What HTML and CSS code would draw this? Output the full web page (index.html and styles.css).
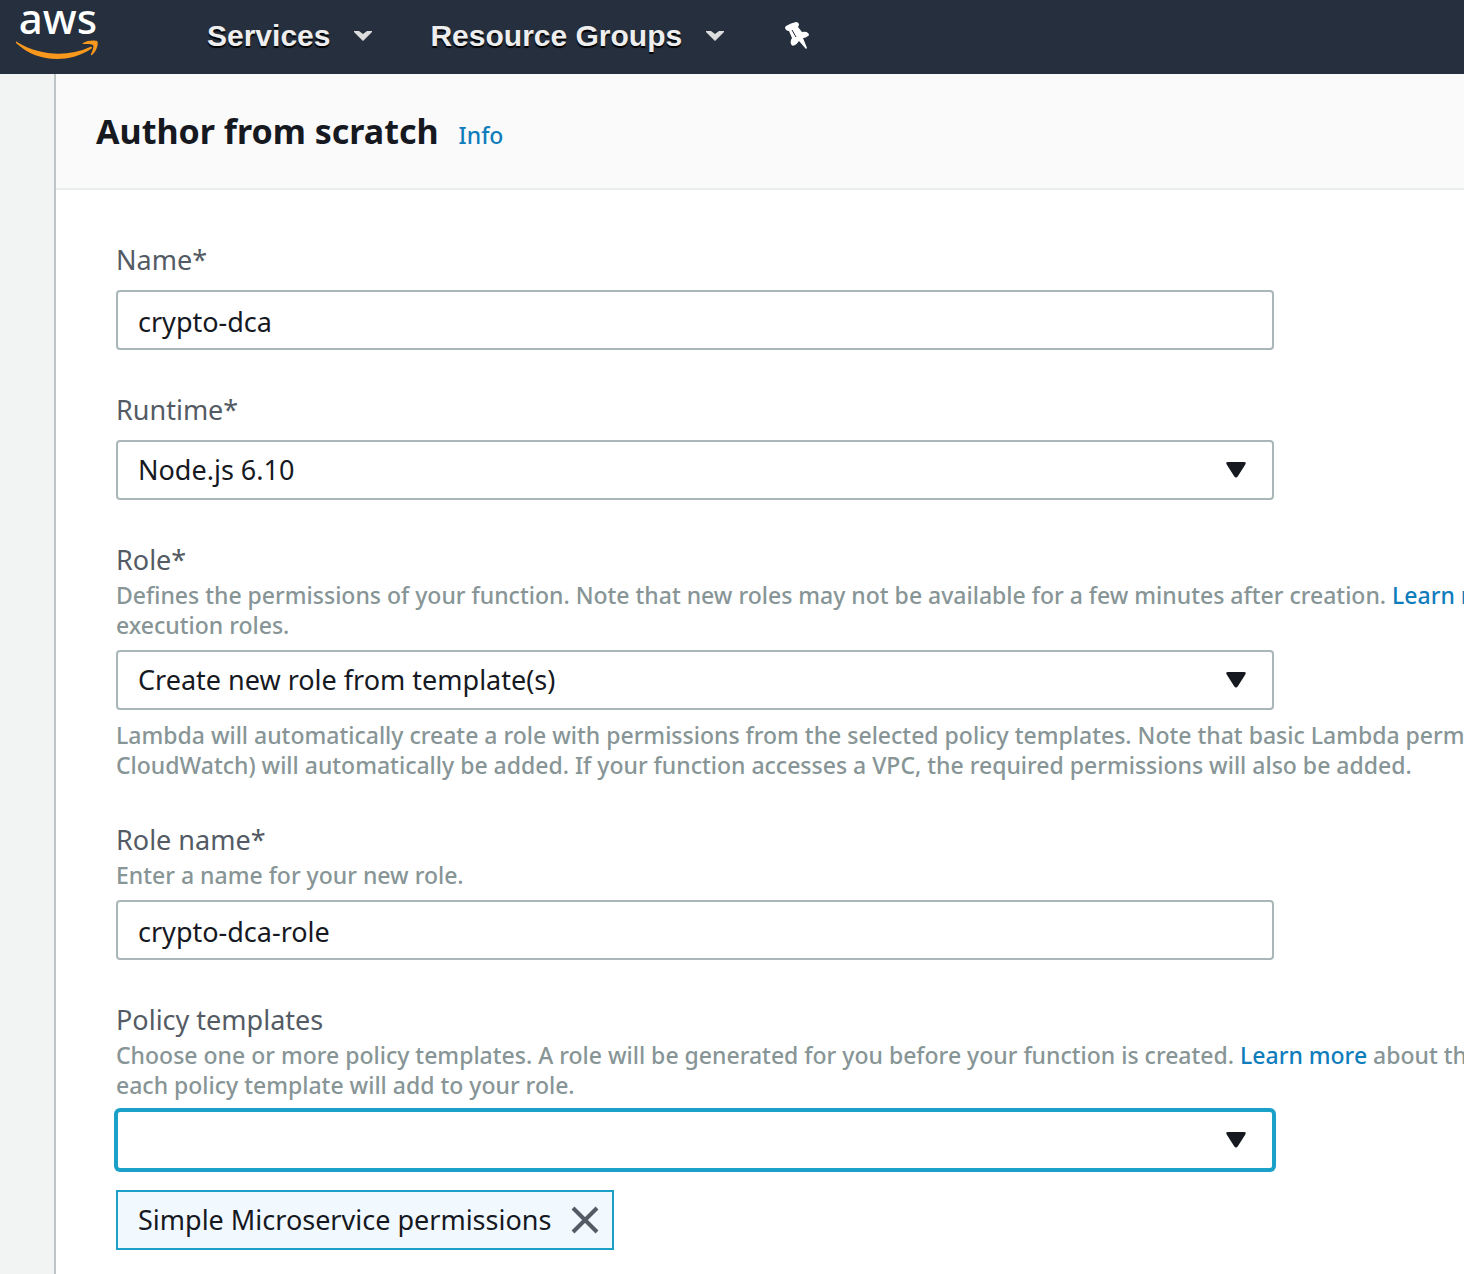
FILE: index.html
```html
<!DOCTYPE html>
<html lang="en">
<head>
<meta charset="utf-8">
<title>Lambda - Author from scratch</title>
<link rel="stylesheet" href="styles.css">
</head>
<body>
<header class="topbar">
  <a class="logo" href="#" aria-label="AWS home">
    <span class="logo-word">aws</span>
    <svg class="logo-smile" viewBox="0 0 84 20" aria-hidden="true">
      <path d="M1 2 C24 16 52 17 74 7 C76 6 77 8 75 9 C64 16 52 19 41 19 C26 19 12 14 0 3 C0 2 0 1 1 2Z"/>
      <path d="M67 3 C71 0 79 0 81 1 C83 3 81 11 76 15 C75 16 75 15 75 14 C77 10 78 6 77 5 C76 4 71 4 68 4 C67 4 66 4 67 3Z"/>
    </svg>
  </a>
  <nav class="menu">
    <button class="menu-item" type="button">Services
      <svg class="chevron" viewBox="0 0 18 10" aria-hidden="true"><path d="M0 0H5L9 3L13 0H18V1L9 10L0 1Z"/></svg>
    </button>
    <button class="menu-item" type="button">Resource Groups
      <svg class="chevron" viewBox="0 0 18 10" aria-hidden="true"><path d="M0 0H5L9 3L13 0H18V1L9 10L0 1Z"/></svg>
    </button>
    <button class="menu-item" type="button" aria-label="Pin shortcuts">
      <svg class="pin" viewBox="0 0 24 28" aria-hidden="true">
        <path class="pin-body" d="M0 6 Q0 5 1 4 Q6 1 11 0 Q13 0 14 2 Q14 4 13 5 L17 10 Q21 9 23 11 Q25 13 23 14 Q21 16 18 16 L22 26 L21 27 L14 19 Q12 22 10 23 Q7 25 6 22 Q5 19 7 16 L4 9 Q1 9 0 6Z"/>
        <path class="pin-line" d="M7 8 L11 15"/>
      </svg>
    </button>
  </nav>
</header>
<main class="page">
  <section class="panel">
    <div class="panel-head">
      <h1 class="title">Author from scratch</h1>
      <a class="info" href="#">Info</a>
    </div>
    <form class="form">
      <div class="field">
        <label class="label" for="name">Name*</label>
        <div class="control"><input class="box" id="name" type="text" value="crypto-dca"></div>
      </div>
      <div class="field">
        <label class="label" for="runtime">Runtime*</label>
        <div class="control">
          <select class="box" id="runtime"><option>Node.js 6.10</option></select>
          <svg class="arrow" viewBox="0 0 20 16" aria-hidden="true"><path d="M2 0H18Q21 0 19 3L12 14Q10 17 8 14L1 3Q-1 0 2 0Z"/></svg>
        </div>
      </div>
      <div class="field">
        <label class="label" for="role">Role*</label>
        <p class="help">Defines the permissions of your function. Note that new roles may not be available for a few minutes after creation. <a href="#">Learn more</a><br>execution roles.</p>
        <div class="control">
          <select class="box" id="role"><option>Create new role from template(s)</option></select>
          <svg class="arrow" viewBox="0 0 20 16" aria-hidden="true"><path d="M2 0H18Q21 0 19 3L12 14Q10 17 8 14L1 3Q-1 0 2 0Z"/></svg>
        </div>
        <p class="help help-below">Lambda will automatically create a role with permissions from the selected policy templates. Note that basic Lambda permissions<br>CloudWatch) will automatically be added. If your function accesses a VPC, the required permissions will also be added.</p>
      </div>
      <div class="field">
        <label class="label" for="role-name">Role name*</label>
        <p class="help">Enter a name for your new role.</p>
        <div class="control"><input class="box" id="role-name" type="text" value="crypto-dca-role"></div>
      </div>
      <div class="field">
        <label class="label" for="policy">Policy templates</label>
        <p class="help">Choose one or more policy templates. A role will be generated for you before your function is created. <a href="#">Learn more</a> about the<br>each policy template will add to your role.</p>
        <div class="control">
          <select class="box box-active" id="policy"><option></option></select>
          <svg class="arrow" viewBox="0 0 20 16" aria-hidden="true"><path d="M2 0H18Q21 0 19 3L12 14Q10 17 8 14L1 3Q-1 0 2 0Z"/></svg>
        </div>
        <div class="chip">
          <span>Simple Microservice permissions</span>
          <button class="chip-close" type="button" aria-label="Remove Simple Microservice permissions">
            <svg viewBox="0 0 28 28" aria-hidden="true"><path d="M2 2L26 26M26 2L2 26"/></svg>
          </button>
        </div>
      </div>
    </form>
  </section>
</main>
</body>
</html>
```
FILE: styles.css
```css
* {
  box-sizing: border-box;
}

body {
  margin: 0;
  min-height: 100vh;
  display: flex;
  flex-direction: column;
  overflow-x: hidden;
  background: #f2f3f3;
  color: #16191f;
  font-family: "Noto Sans", "Open Sans", sans-serif;
  font-size: 27px;
  line-height: 30px;
}

a {
  color: #0f7dbc;
  text-decoration: none;
}

button {
  padding: 0;
  border: 0;
  background: none;
  font: inherit;
  color: inherit;
}

svg {
  display: block;
}

.topbar {
  display: flex;
  align-items: center;
  height: 74px;
  padding: 0 16px 2px;
  background: #252f3e;
}

.logo {
  display: flex;
  flex-direction: column;
  align-items: center;
  gap: 4px;
  width: 84px;
  padding-bottom: 12px;
  color: #fff;
}

.logo-word {
  font-size: 42px;
  font-weight: 500;
  line-height: 36px;
}

.logo-smile {
  width: 84px;
  height: 20px;
  fill: #f8991d;
}

.menu {
  display: flex;
  align-items: center;
  gap: 58px;
  margin-left: 107px;
  color: #eee;
  font-family: "Liberation Sans", Arial, sans-serif;
  font-size: 30px;
  font-weight: 700;
  text-shadow: 0 2px 1px #000;
}

.menu-item {
  display: flex;
  align-items: center;
  gap: 24px;
  text-shadow: inherit;
  white-space: nowrap;
}

.chevron {
  width: 18px;
  height: 10px;
  fill: #ddd;
}

.pin {
  width: 24px;
  height: 28px;
  margin-left: 3px;
}

.pin-body {
  fill: #fff;
}

.pin-line {
  fill: none;
  stroke: #252f3e;
  stroke-width: 1;
}

.page {
  display: flex;
  flex: 1;
  padding-left: 54px;
}

.panel {
  flex: 1;
  min-width: 0;
  border-left: 2px solid #bfc5c7;
  background: #fff;
}

.panel-head {
  display: flex;
  align-items: baseline;
  gap: 20px;
  padding: 36px 40px;
  border-bottom: 2px solid #eaeded;
  background: #fafafa;
}

.title {
  margin: 0;
  font-size: 34px;
  font-weight: 700;
  line-height: 42px;
}

.info {
  font-size: 23px;
  font-weight: 500;
}

.form {
  display: flex;
  flex-direction: column;
  gap: 45px;
  padding: 55px 60px 24px;
}

.label {
  display: block;
  color: #545b64;
}

.help {
  margin: 5px 0 0;
  color: #879596;
  font-size: 23px;
  font-weight: 500;
  white-space: nowrap;
}

.help-below {
  margin-top: 10px;
}

.control {
  position: relative;
  max-width: 1158px;
  margin-top: 10px;
}

.label + .control {
  margin-top: 15px;
}

.box {
  display: block;
  width: 100%;
  height: 60px;
  padding: 0 20px;
  border: 2px solid #aab7b8;
  border-radius: 4px;
  outline: 0;
  background: #fff;
  color: #16191f;
  font: inherit;
  line-height: 40px;
  appearance: none;
}

input.box {
  padding-top: 3px;
}

.box-active {
  border-color: #1ba1c9;
  box-shadow: 0 0 0 2px #1ba1c9;
}

.arrow {
  position: absolute;
  top: 22px;
  right: 28px;
  width: 20px;
  height: 16px;
  fill: #16191f;
  pointer-events: none;
}

.chip {
  display: flex;
  align-items: center;
  gap: 20px;
  width: fit-content;
  height: 60px;
  margin-top: 20px;
  padding: 0 13px 0 20px;
  border: 2px solid #1ba1c9;
  background: #f1f9ff;
}

.chip-close svg {
  width: 28px;
  height: 28px;
  fill: none;
  stroke: #545b64;
  stroke-width: 4;
}
```
